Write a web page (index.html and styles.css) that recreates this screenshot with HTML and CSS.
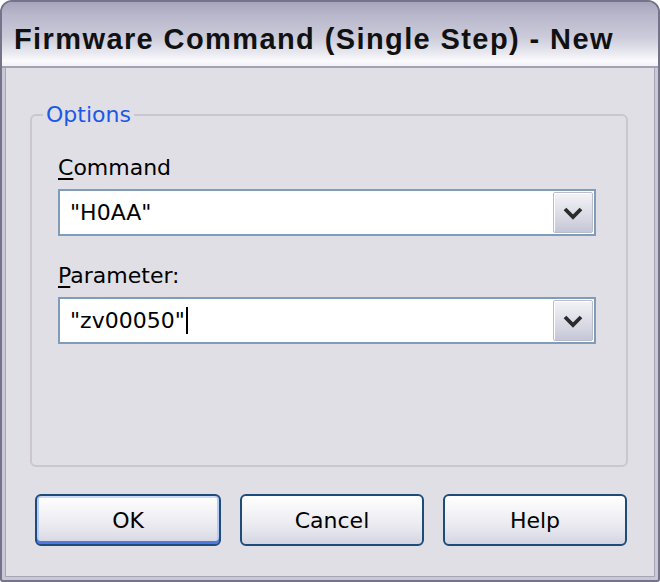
FILE: index.html
```html
<!DOCTYPE html>
<html>
<head>
<meta charset="utf-8">
<link rel="stylesheet" href="styles.css">
</head>
<body>
<div class="window">
  <div class="titlebar">Firmware Command (Single Step) - New</div>
  <div class="frame">
    <div class="content">
      <fieldset class="group">
        <legend class="legend">Options</legend>
        <label class="field-label"><span class="ul">C</span>ommand</label>
        <div class="combo">
          <span class="combo-text">"H0AA"</span>
          <span class="combo-btn">
            <svg width="20" height="14" viewBox="0 0 20 14"><polyline points="2,3 10,11 18,3" fill="none" stroke="#2b2b2b" stroke-width="3.8" stroke-linejoin="miter"/></svg>
          </span>
        </div>
        <label class="field-label field-label-2"><span class="ul">P</span>arameter:</label>
        <div class="combo">
          <span class="combo-text">"zv00050"<span class="caret"></span></span>
          <span class="combo-btn">
            <svg width="20" height="14" viewBox="0 0 20 14"><polyline points="2,3 10,11 18,3" fill="none" stroke="#2b2b2b" stroke-width="3.8" stroke-linejoin="miter"/></svg>
          </span>
        </div>
      </fieldset>
      <div class="buttons">
        <button class="btn btn-default">OK</button>
        <button class="btn">Cancel</button>
        <button class="btn">Help</button>
      </div>
    </div>
  </div>
</div>
</body>
</html>
```
FILE: styles.css
```css
html, body {
  margin: 0;
  padding: 0;
  background: #ffffff;
}
.window {
  width: 660px;
  height: 582px;
  box-sizing: border-box;
  border: 2px solid #74738a;
  border-radius: 12px 12px 3px 3px;
  display: flex;
  flex-direction: column;
  overflow: hidden;
  background: #c9c8d6;
}
.titlebar {
  height: 66px;
  flex: none;
  box-sizing: border-box;
  padding-left: 12px;
  padding-top: 10px;
  display: flex;
  align-items: center;
  font-family: "Liberation Sans", Arial, sans-serif;
  font-weight: bold;
  font-size: 29px;
  color: #111;
  letter-spacing: 1.4px;
  background: linear-gradient(to bottom, #a6a5bd 0%, #b8b7cb 20%, #cbcbda 55%, #e9e9f0 80%, #fbfbfd 92%, #f2f2f6 100%);
  border-bottom: 2px solid #a3a2b4;
}
.frame {
  flex: 1;
  padding: 0 3px 3px 3px;
  display: flex;
}
.content {
  flex: 1;
  background: #e0dfe5;
  border: 1px solid #a7a6b6;
  border-top: none;
  padding: 34px 26px 28px 24px;
  display: flex;
  flex-direction: column;
  font-family: "DejaVu Sans", Verdana, sans-serif;
  font-size: 22px;
  color: #000;
}
.group {
  margin: 0;
  height: 365px;
  box-sizing: border-box;
  border: 2px solid #cbc7cc;
  border-radius: 6px;
  padding: 27px 30px 0 26px;
  display: flex;
  flex-direction: column;
}
.legend {
  color: #1c58e8;
  padding: 0 3px;
  margin-left: -15px;
  line-height: 26px;
}
.field-label {
  display: block;
  line-height: 26px;
  height: 26px;
  margin-bottom: 8px;
}
.field-label-2 {
  margin-top: 27px;
}
.ul {
  text-decoration: underline;
  text-underline-offset: 3px;
}
.combo {
  height: 47px;
  box-sizing: border-box;
  border: 2px solid #7f9db9;
  background: #ffffff;
  display: flex;
  align-items: center;
  padding: 1px 1px 1px 10px;
}
.combo-text {
  flex: 1;
  display: flex;
  align-items: center;
  line-height: 26px;
}
.caret {
  display: inline-block;
  width: 2px;
  height: 27px;
  background: #000;
  margin-left: 1px;
}
.combo-btn {
  width: 40px;
  height: 41px;
  box-sizing: border-box;
  border: 1px solid #b9bccb;
  border-radius: 2px;
  background: linear-gradient(to bottom, #f3f3f7 0%, #e4e4ec 35%, #d2d3df 75%, #c5c6d6 100%);
  box-shadow: inset 1px 1px 0 #ffffff;
  display: flex;
  align-items: center;
  justify-content: center;
}
.buttons {
  margin-top: 27px;
  display: flex;
  justify-content: flex-end;
  gap: 19px;
  padding-right: 1px;
}
.btn {
  width: 184px;
  height: 52px;
  flex: none;
  box-sizing: border-box;
  border: 2px solid #1d4c7a;
  border-radius: 6px;
  background: linear-gradient(to bottom, #ffffff 0%, #f5f5f8 30%, #e6e6ee 70%, #d5d5e2 100%);
  font-family: "DejaVu Sans", Verdana, sans-serif;
  font-size: 22px;
  color: #000;
  padding: 0;
}
.btn-default {
  width: 186px;
  box-shadow: inset 0 -3px 0 #4f7ae0, inset 2px 0 0 #b9ccf5, inset -2px 0 0 #b9ccf5, inset 0 2px 0 #cddbf8;
}
```
